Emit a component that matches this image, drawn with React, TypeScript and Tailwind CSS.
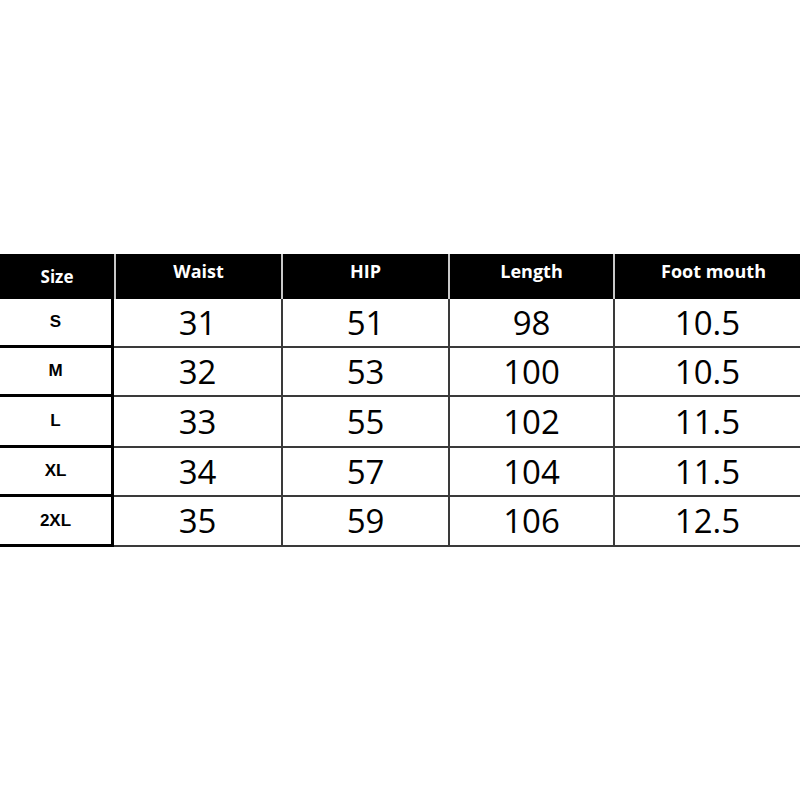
const headers = ['Waist', 'HIP', 'Length', 'Foot mouth'];

const rows = [
  { size: 'S', values: ['31', '51', '98', '10.5'], h: 'h-[49px]' },
  { size: 'M', values: ['32', '53', '100', '10.5'], h: 'h-[49px]' },
  { size: 'L', values: ['33', '55', '102', '11.5'], h: 'h-[51px]' },
  { size: 'XL', values: ['34', '57', '104', '11.5'], h: 'h-[49px]' },
  { size: '2XL', values: ['35', '59', '106', '12.5'], h: 'h-[50px]' },
];

// header column widths (separators drawn as border-l)
const headCols = ['w-[167px]', 'w-[167px]', 'w-[165px]', 'flex-1 pl-[12px]'];
// body column widths (lines drawn as border-r)
const bodyCols = ['w-[169px]', 'w-[167px]', 'w-[165px]', 'flex-1'];

const App = () => {
  return (
    <div className="w-[800px] h-[800px] bg-white pt-[254px]">
      {/* header band */}
      <div className="flex h-[45px] bg-black text-white font-bold text-[18px] font-['Open_Sans',sans-serif]">
        <div className="w-[114px] flex items-center justify-center pt-[1px] text-[17px]">Size</div>
        {headers.map((label, i) => (
          <div
            key={label}
            className={`${headCols[i]} flex justify-center pt-[4px] border-l-2 border-[#c8c8c8]`}
          >
            {label}
          </div>
        ))}
      </div>

      {/* body rows */}
      {rows.map((row) => (
        <div key={row.size} className={`flex ${row.h}`}>
          <div className="w-[114px] flex items-center justify-center border-r-[3px] border-b-[3px] border-black font-bold text-[17px] text-black font-['Liberation_Sans',sans-serif]">
            {row.size}
          </div>
          {row.values.map((v, i) => (
            <div
              key={i}
              className={`${bodyCols[i]} flex items-center justify-center border-b-2 border-[#3a3a3a] ${
                i < 3 ? 'border-r-2' : ''
              } text-[33px] text-black font-['Open_Sans',sans-serif]`}
            >
              {v}
            </div>
          ))}
        </div>
      ))}
    </div>
  );
};

export default App;
